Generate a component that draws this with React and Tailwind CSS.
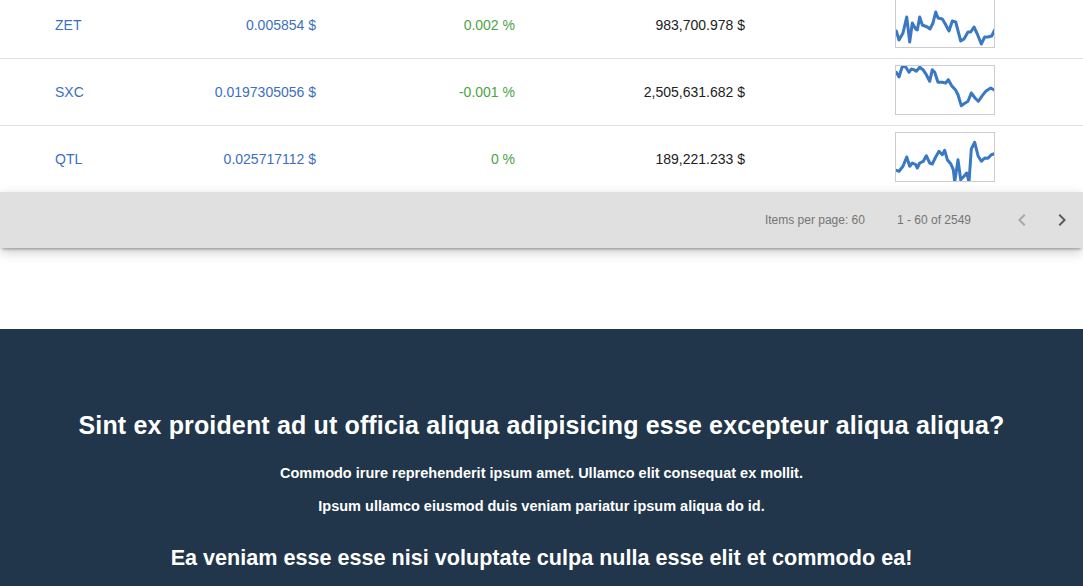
import React from "react";

const rows = [
  {
    sym: "ZET",
    price: "0.005854 $",
    change: "0.002 %",
    cap: "983,700.978 $",
    pts: "0.3,33 3,42 7,35 10.7,19 13.7,44 16.3,25 19.7,31 21.3,32 23.7,19 26.3,27 31.3,29 34,31 37,25 39.7,14 42,20 46.3,21 48.7,25 53,33 56.3,23 59.7,24 64.7,43 68,41 72,34 74.7,34 78,29 81.3,36 85.3,46 88.7,39 92,39 95.7,38 98.7,32",
  },
  {
    sym: "SXC",
    price: "0.0197305056 $",
    change: "-0.001 %",
    cap: "2,505,631.682 $",
    pts: "0.3,7.3 3,12 6.3,1.3 9.7,2 13,7.3 15.3,4 18,4.7 20.3,6.3 23.7,2.3 27,4.7 30.3,9.7 33.7,16.3 36.3,4.7 38.7,7.3 42,17.3 46.3,17.3 49.7,18 52.3,14.7 55.7,20.7 59.7,25.3 62,29.7 65.3,40.7 68,38.7 72,36.3 75.3,28 79,33 82.3,36.3 86.3,30.7 89.7,26.3 94.7,23 98.7,25.3",
  },
  {
    sym: "QTL",
    price: "0.025717112 $",
    change: "0 %",
    cap: "189,221.233 $",
    pts: "0.3,38.3 3,39.3 7,34.3 10.7,25 13.7,34.3 16.3,31 19.7,32.7 21.3,36 23.7,31 27.3,29.3 30.3,23.7 33.7,31 36.3,32 39.7,25 43,19.3 46.3,22.7 48.7,18.3 51.3,27.7 54.7,31.7 57.3,37.7 58.7,50 62,27.7 64.7,47.7 68,44.3 70.7,41 73,50 75.3,17 78.7,10.3 82,23.7 85.3,29.3 88.7,26 92,26.3 95.3,22.7 98.7,21.7",
    last: true,
  },
];

function Spark({ pts }) {
  return (
    <div className="w-[100px] h-[50px] border border-[#cccccc] overflow-hidden box-border">
      <svg width="98" height="48" viewBox="0 1 98 48" className="block">
        <polyline
          points={pts}
          fill="none"
          stroke="#3a78c4"
          strokeWidth="3"
          strokeLinejoin="round"
          strokeLinecap="round"
        />
      </svg>
    </div>
  );
}

function Chevron({ dir, color }) {
  return (
    <svg width="24" height="24" viewBox="0 0 24 24" fill={color}>
      {dir === "left" ? (
        <path d="M15.41 7.41L14 6l-6 6 6 6 1.41-1.41L10.83 12z" />
      ) : (
        <path d="M10 6L8.59 7.41 13.17 12l-4.58 4.59L10 18l6-6z" />
      )}
    </svg>
  );
}

export default function App() {
  return (
    <div
      className="w-[1083px] h-[586px] overflow-hidden bg-white"
      style={{ fontFamily: '"Liberation Sans", Arial, sans-serif' }}
    >
      <div className="-mt-[8px]">
        {rows.map((r) => (
          <div
            key={r.sym}
            className={
              "flex items-center text-[14px] " +
              (r.last ? "h-[66px]" : "h-[67px] border-b border-[#e0e0e0]")
            }
          >
            <div className="w-[180px] pl-[55px] text-[#3d6fbf]">{r.sym}</div>
            <div className="w-[136px] text-right text-[#3d6fbf]">{r.price}</div>
            <div className="w-[199px] text-right text-[#4ba345]">{r.change}</div>
            <div className="w-[230px] text-right text-[#222222]">{r.cap}</div>
            <div className="ml-[150px] mb-[4px]">
              <Spark pts={r.pts} />
            </div>
          </div>
        ))}
      </div>
      <div className="relative h-[56px] bg-[#e0e0e0] flex items-center justify-end text-[12px] text-[#757575] shadow-[0_3px_3px_-2px_rgba(0,0,0,0.35),0_4px_12px_rgba(0,0,0,0.2)]">
        <span>Items per page: 60</span>
        <span className="ml-[32px]">1 - 60 of 2549</span>
        <div className="ml-[31px] w-[40px] h-[40px] flex items-center justify-center">
          <Chevron dir="left" color="#a8a8a8" />
        </div>
        <div className="mr-[1px] w-[40px] h-[40px] flex items-center justify-center">
          <Chevron dir="right" color="#5a5a5a" />
        </div>
      </div>
      <div className="h-[81px]" />
      <div className="bg-[#21364a] text-white text-center font-bold pt-[80px] pb-[40px]">
        <h2 className="text-[25px] leading-[32px] tracking-[0.15px]">
          Sint ex proident ad ut officia aliqua adipisicing esse excepteur aliqua aliqua?
        </h2>
        <p className="mt-[22px] text-[14.5px] leading-[20px]">
          Commodo irure reprehenderit ipsum amet. Ullamco elit consequat ex mollit.
        </p>
        <p className="mt-[13px] text-[14.5px] leading-[20px]">
          Ipsum ullamco eiusmod duis veniam pariatur ipsum aliqua do id.
        </p>
        <h3 className="mt-[27px] text-[21.6px] leading-[30px]">
          Ea veniam esse esse nisi voluptate culpa nulla esse elit et commodo ea!
        </h3>
      </div>
    </div>
  );
}
